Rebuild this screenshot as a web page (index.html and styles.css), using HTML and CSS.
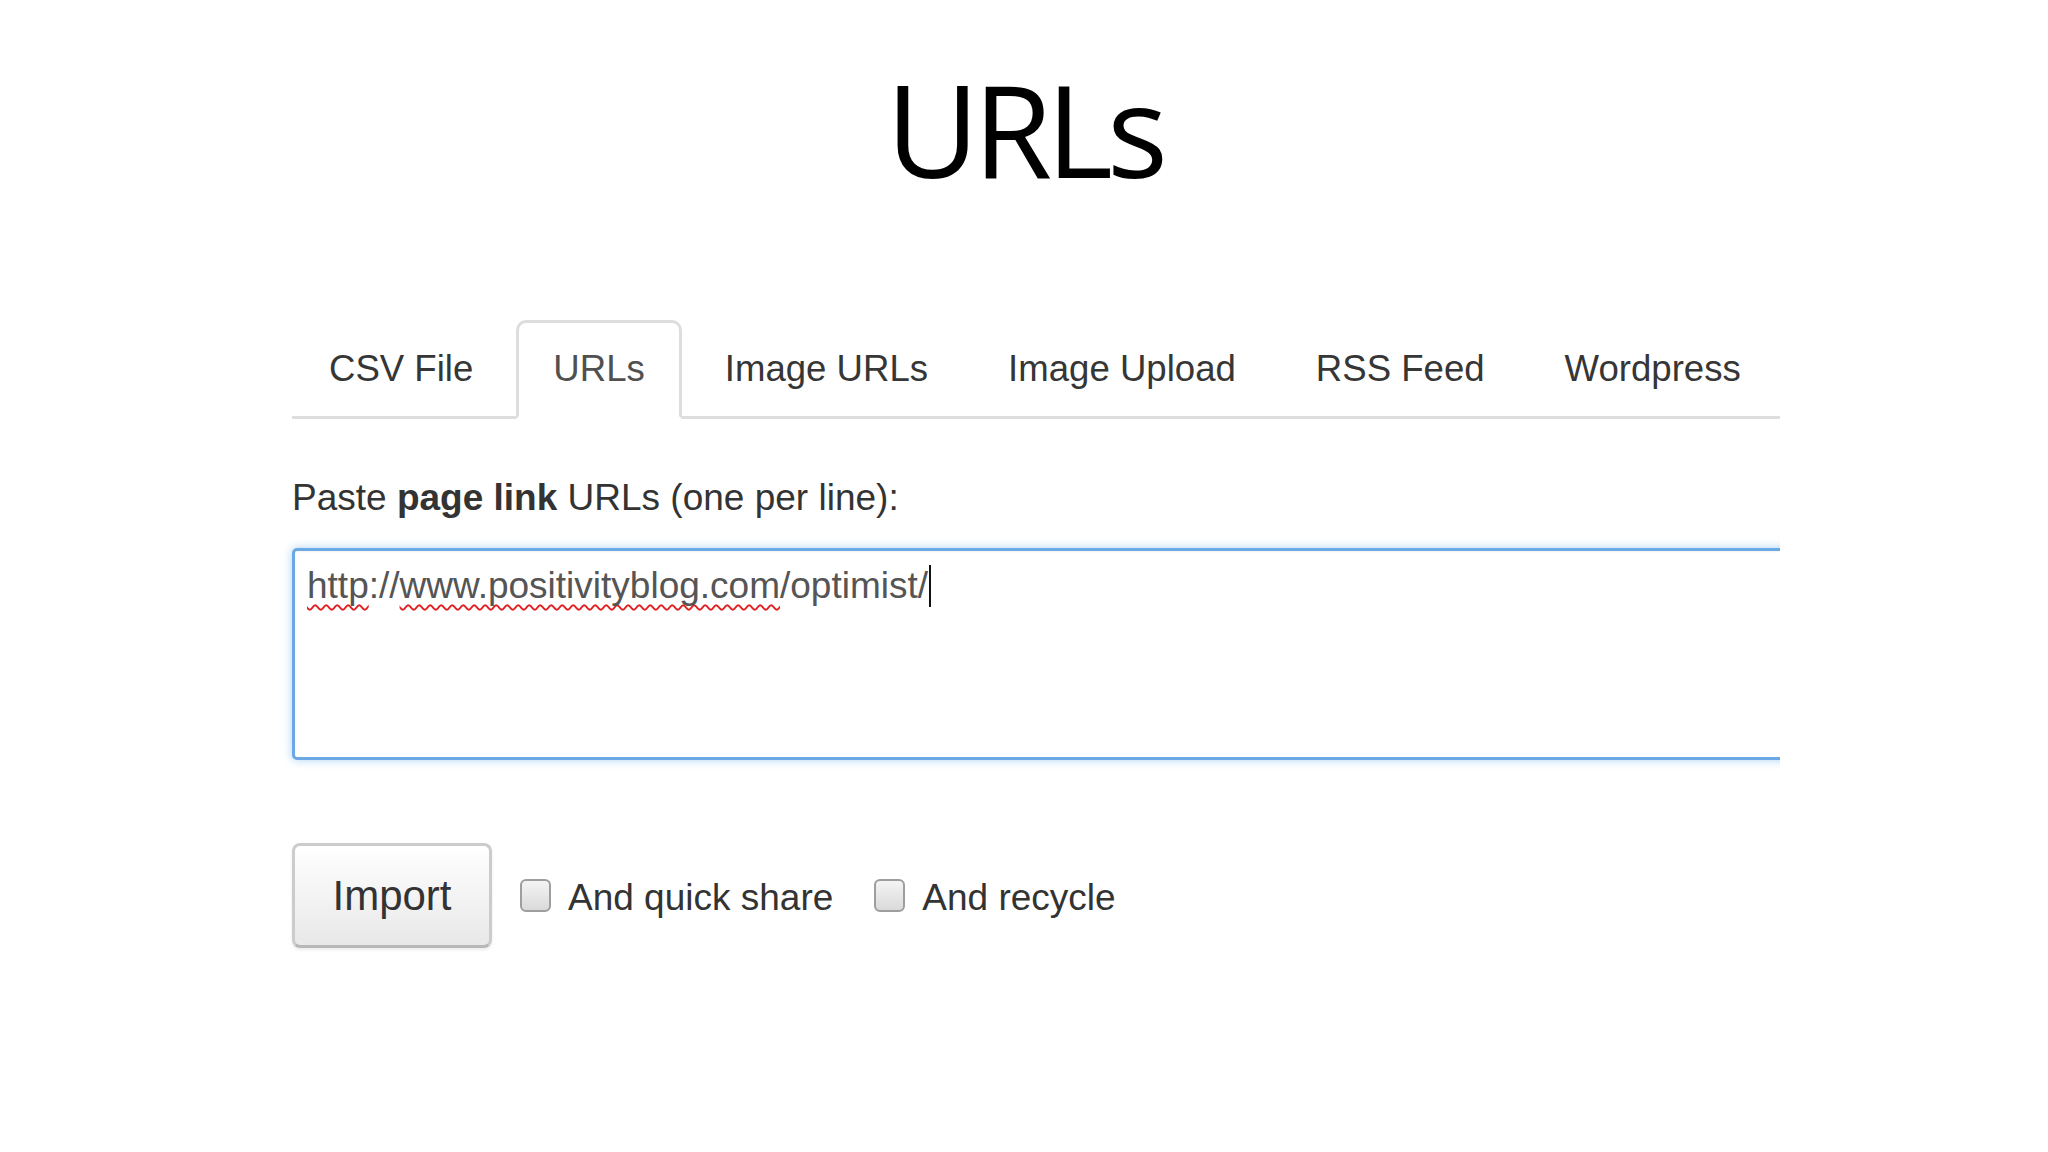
FILE: index.html
```html
<!DOCTYPE html>
<html lang="en">
<head>
<meta charset="utf-8">
<title>URLs</title>
<link rel="stylesheet" href="styles.css">
</head>
<body>
<h1 class="title">URLs</h1>
<main class="panel">
  <ul class="tabs">
    <li class="tab"><a>CSV File</a></li>
    <li class="tab active"><a>URLs</a></li>
    <li class="tab"><a>Image URLs</a></li>
    <li class="tab"><a>Image Upload</a></li>
    <li class="tab"><a>RSS Feed</a></li>
    <li class="tab"><a>Wordpress</a></li>
  </ul>
  <p class="label">Paste <b>page link</b> URLs (one per line):</p>
  <div class="field-clip">
    <div class="field"><span class="misspelt">http</span>://<span class="misspelt">www.positivityblog.com</span>/optimist/<span class="caret"></span></div>
  </div>
  <div class="actions">
    <button class="btn">Import</button>
    <label class="check"><span class="box"></span><span class="check-text">And quick share</span></label>
    <label class="check"><span class="box"></span><span class="check-text">And recycle</span></label>
  </div>
</main>
</body>
</html>
```
FILE: styles.css
```css
html, body {
  margin: 0;
  padding: 0;
  background: #ffffff;
}
body {
  width: 2048px;
  height: 1152px;
  overflow: hidden;
  font-family: "Liberation Sans", Arial, sans-serif;
  color: #333333;
}
.title {
  margin: 65px 0 0 0;
  font-family: "Open Sans", "Noto Sans", sans-serif;
  font-weight: 400;
  font-size: 128px;
  line-height: 128px;
  letter-spacing: -6px;
  text-align: center;
  color: #000000;
}
.panel {
  margin: 127px 0 0 292px;
  width: 1488px;
}
.tabs {
  list-style: none;
  margin: 0;
  padding: 0;
  display: flex;
  border-bottom: 3px solid #dddddd;
}
.tab {
  flex: 0 0 auto;
  margin: 0 6px -3px 0;
  white-space: nowrap;
}
.tab a {
  display: block;
  padding: 20px 34px 21px;
  font-size: 36.6px;
  line-height: 52px;
  color: #363636;
  border: 3px solid transparent;
  border-radius: 10px 10px 0 0;
}
.tab.active a {
  color: #505050;
  background: #ffffff;
  border-color: #dddddd;
  border-bottom-color: #ffffff;
}
.label {
  margin: 53px 0 0 0;
  font-size: 37px;
  line-height: 52px;
  color: #333333;
}
.label b {
  font-weight: 700;
}
.field-clip {
  margin: 14px 0 0 -12px;
  padding: 10px 0 10px 12px;
  overflow: hidden;
}
.field {
  width: 1560px;
  height: 197px;
  padding: 9px 12px 0;
  border: 3px solid #6aa9e6;
  border-radius: 5px;
  box-shadow: 0 0 10px rgba(102, 175, 233, 0.55), inset 0 1px 2px rgba(0, 0, 0, 0.05);
  font-size: 37px;
  line-height: 52px;
  color: #555555;
  background: #ffffff;
  white-space: nowrap;
}
.misspelt {
  text-decoration: underline wavy #e02020;
  text-decoration-thickness: 2px;
  text-decoration-skip-ink: none;
  text-underline-offset: 6px;
}
.caret {
  display: inline-block;
  width: 0;
  height: 42px;
  border-left: 2px solid #111111;
  vertical-align: -9px;
  margin-left: 1px;
}
.actions {
  margin-top: 73px;
  display: flex;
  align-items: center;
}
.btn {
  width: 200px;
  height: 105px;
  margin: 0 28px 0 0;
  padding: 0;
  font-family: "Liberation Sans", Arial, sans-serif;
  font-size: 42px;
  color: #333333;
  background: linear-gradient(#ffffff, #e8e8e8);
  border: 3px solid #cccccc;
  border-bottom-color: #b8b8b8;
  border-radius: 8px;
  box-shadow: 0 2px 3px rgba(0, 0, 0, 0.08);
}
.check {
  display: flex;
  align-items: center;
  margin-right: 41px;
  font-size: 37px;
  line-height: 52px;
  color: #333333;
}
.check-text {
  padding-top: 4px;
}
.box {
  width: 27px;
  height: 29px;
  margin-right: 17px;
  border: 2px solid #9e9e9e;
  border-radius: 6px;
  background: linear-gradient(#f4f4f4, #dadada);
}
```
